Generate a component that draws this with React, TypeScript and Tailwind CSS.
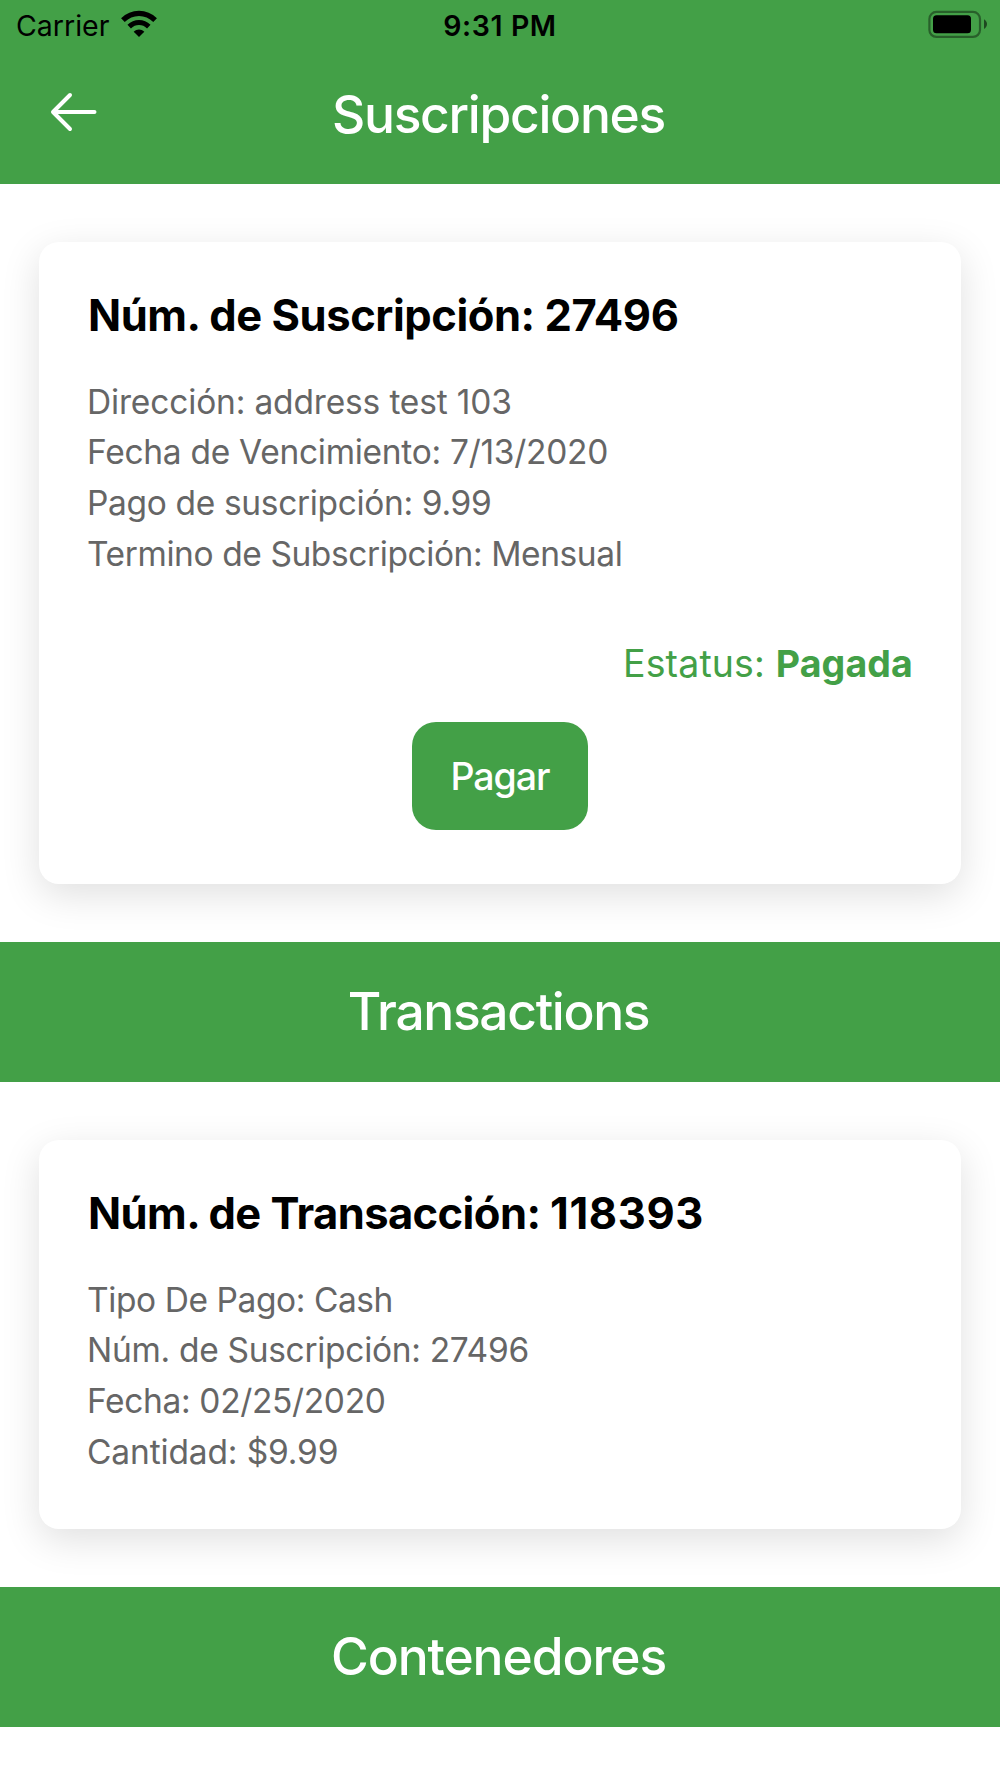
import type { ReactNode } from "react";

const WifiIcon = () => (
  <svg width="36" height="28" viewBox="0 0 36 28" fill="none">
    <path d="M1.9 10.2C11 1.2 25 1.2 34.1 10.2" stroke="#000" strokeWidth="5.2" />
    <path d="M8.2 16.6C13.8 11.2 22.2 11.2 27.8 16.6" stroke="#000" strokeWidth="5" />
    <path d="M12.7 21.7C15.8 18.7 20.2 18.7 23.3 21.7L18 27Z" fill="#000" />
  </svg>
);

const BatteryIcon = () => (
  <svg width="60" height="28" viewBox="0 0 60 28">
    <rect
      x="1.4"
      y="1.9"
      width="50.6"
      height="25"
      rx="7"
      fill="none"
      stroke="#000"
      strokeOpacity="0.4"
      strokeWidth="2.2"
    />
    <rect x="5" y="5.3" width="38" height="18" rx="3.5" fill="#000" />
    <path d="M56 9.2C60 11.5 60 16.5 56 19Z" fill="#000" fillOpacity="0.55" />
  </svg>
);

const BackIcon = () => (
  <svg width="48" height="42" viewBox="0 0 48 42" fill="none">
    <path
      d="M20 4L3 21L20 38M3.5 21H44.5"
      stroke="#fff"
      strokeWidth="4"
      strokeLinecap="round"
      strokeLinejoin="round"
    />
  </svg>
);

const StatusBar = () => (
  <div className="grid h-[53px] grid-cols-3 items-start text-black">
    <div className="flex pl-[16px]">
      <span className="w-[93px] pt-[6px] text-[28.5px] leading-[40px]">
        Carrier
      </span>
      <div className="pt-[10px] pl-[12px]">
        <WifiIcon />
      </div>
    </div>
    <span className="pt-[6px] text-center text-[28.5px] leading-[40px] font-semibold tracking-[0.6px]">
      9:31 PM
    </span>
    <div className="flex justify-end pt-[10px] pr-[12px]">
      <BatteryIcon />
    </div>
  </div>
);

type SectionTitleProps = {
  children: ReactNode;
  className: string;
};

const SectionTitle = ({ children, className }: SectionTitleProps) => (
  <h2
    className={`flex h-[140px] items-center justify-center bg-[#43a047] pr-[3px] pb-[1px] text-[51.5px] font-medium text-white ${className}`}
  >
    {children}
  </h2>
);

type CardProps = {
  title: ReactNode;
  lines: { text: string; className: string }[];
  className: string;
  children?: ReactNode;
};

const Card = ({ title, lines, className, children }: CardProps) => (
  <div
    className={`mx-[39px] my-[58px] rounded-[20px] bg-white px-[48px] pt-[43px] shadow-[0_11px_38px_rgba(0,0,0,0.125)] ${className}`}
  >
    <h3 className="pl-[1px] text-[43.5px] leading-[60px] font-bold text-black">
      {title}
    </h3>
    <div className="pt-[31.5px] text-[33.5px] leading-[50.8px] text-[#666]">
      {lines.map((line) => (
        <p key={line.text} className={line.className}>
          {line.text}
        </p>
      ))}
    </div>
    {children}
  </div>
);

const App = () => {
  return (
    <div className="h-[1778px] overflow-hidden bg-white font-['Inter','Liberation_Sans',sans-serif]">
      <header className="h-[184px] bg-[#43a047]">
        <StatusBar />
        <div className="grid grid-cols-[200px_1fr_200px] items-center">
          <button className="pt-[18px] pl-[50px]">
            <BackIcon />
          </button>
          <h1 className="pt-[23px] pr-[3px] text-center text-[51.5px] leading-[76px] font-medium tracking-[-1.3px] text-white">
            Suscripciones
          </h1>
        </div>
      </header>

      <Card
        title={<span className="tracking-[-0.44px]">Núm. de Suscripción: 27496</span>}
        className="h-[642px]"
        lines={[
          { text: "Dirección: address test 103", className: "tracking-[-0.16px]" },
          { text: "Fecha de Vencimiento: 7/13/2020", className: "tracking-[-0.28px]" },
          { text: "Pago de suscripción: 9.99", className: "tracking-[-0.34px]" },
          { text: "Termino de Subscripción: Mensual", className: "tracking-[-0.41px]" },
        ]}
      >
        <p className="pt-[59px] text-right text-[37.5px] leading-[50px] tracking-[0.14px] text-[#43a047]">
          Estatus: <span className="font-bold">Pagada</span>
        </p>
        <div className="flex justify-center pt-[33px]">
          <button className="h-[108px] w-[176px] rounded-[24px] bg-[#43a047] pt-[2px] text-[37.5px] font-medium tracking-[-1px] text-white">
            Pagar
          </button>
        </div>
      </Card>

      <SectionTitle className="tracking-[-1.35px]">Transactions</SectionTitle>

      <Card
        title={
          <>
            <span className="tracking-[-0.58px]">Núm. de Transacción: </span>
            <span className="tracking-[0.6px]">118393</span>
          </>
        }
        className="h-[389px]"
        lines={[
          { text: "Tipo De Pago: Cash", className: "tracking-[-0.42px]" },
          { text: "Núm. de Suscripción: 27496", className: "tracking-[-0.3px]" },
          { text: "Fecha: 02/25/2020", className: "tracking-[-0.35px]" },
          { text: "Cantidad: $9.99", className: "tracking-[-0.14px]" },
        ]}
      />

      <SectionTitle className="tracking-[-1.1px]">Contenedores</SectionTitle>
    </div>
  );
};

export default App;
